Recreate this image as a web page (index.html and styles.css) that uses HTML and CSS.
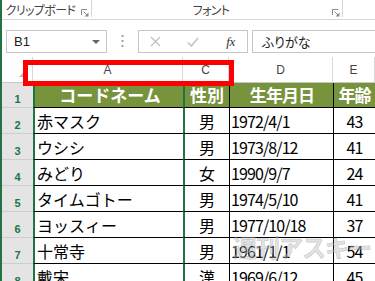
FILE: index.html
```html
<!DOCTYPE html>
<html lang="ja">
  <head>
    <meta charset="UTF-8" />
    <title>ふりがな - Excel</title>
    <link rel="stylesheet" href="styles.css">
  </head>
  <body>
    <div class="app">
      <div class="ribbon">
        <div class="group group-clip">
          <span class="group-label">クリップボード</span>
          <span class="launcher">
            <svg width="8" height="8" viewBox="0 0 8 8"><path d="M0.5 6V0.5H6" fill="none" stroke="#8a8a8a"/><path d="M2.5 2.5L6.5 6.5" stroke="#8a8a8a"/><path d="M3.5 7.5H7.5V3.5Z" fill="#8a8a8a"/></svg>
          </span>
        </div>
        <div class="group group-font">
          <span class="group-label">フォント</span>
          <span class="launcher">
            <svg width="8" height="8" viewBox="0 0 8 8"><path d="M0.5 6V0.5H6" fill="none" stroke="#8a8a8a"/><path d="M2.5 2.5L6.5 6.5" stroke="#8a8a8a"/><path d="M3.5 7.5H7.5V3.5Z" fill="#8a8a8a"/></svg>
          </span>
        </div>
      </div>

      <div class="formula-bar">
        <div class="name-box">
          <span>B1</span>
          <span class="arrow"></span>
        </div>
        <div class="dots">
          <svg width="3" height="13" viewBox="0 0 3 13"><rect x="0.5" y="0" width="2" height="2" fill="#a0a0a0"/><rect x="0.5" y="5" width="2" height="2" fill="#a0a0a0"/><rect x="0.5" y="10" width="2" height="2" fill="#a0a0a0"/></svg>
        </div>
        <div class="fx-buttons">
          <span class="fx-cancel">
            <svg width="11" height="11" viewBox="0 0 11 11"><path d="M1 1L10 10M10 1L1 10" stroke="#c0c0c0" stroke-width="1.2"/></svg>
          </span>
          <span class="fx-enter">
            <svg width="12" height="10" viewBox="0 0 12 10"><path d="M1 5.5L4.5 9L11 1" fill="none" stroke="#c0c0c0" stroke-width="1.5"/></svg>
          </span>
          <span class="fx-func">fx</span>
        </div>
        <div class="formula-input">ふりがな</div>
      </div>

      <div class="sheet">
        <div class="row col-head">
          <div class="corner"><span class="corner-mark"></span></div>
          <div>A</div>
          <div>C</div>
          <div>D</div>
          <div>E</div>
        </div>
        <div class="row title-row">
          <div class="rh">1</div>
          <div class="ca">コードネーム</div>
          <div class="cc">性別</div>
          <div class="cd">生年月日</div>
          <div class="ce">年齢</div>
        </div>
        <div class="row">
          <div class="rh">2</div>
          <div class="ca">赤マスク</div>
          <div class="cc">男</div>
          <div class="cd">1972/4/1</div>
          <div class="ce">43</div>
        </div>
        <div class="row">
          <div class="rh">3</div>
          <div class="ca">ウシシ</div>
          <div class="cc">男</div>
          <div class="cd">1973/8/12</div>
          <div class="ce">41</div>
        </div>
        <div class="row">
          <div class="rh">4</div>
          <div class="ca">みどり</div>
          <div class="cc">女</div>
          <div class="cd">1990/9/7</div>
          <div class="ce">24</div>
        </div>
        <div class="row">
          <div class="rh">5</div>
          <div class="ca">タイムゴトー</div>
          <div class="cc">男</div>
          <div class="cd">1974/5/10</div>
          <div class="ce">41</div>
        </div>
        <div class="row">
          <div class="rh">6</div>
          <div class="ca">ヨッスィー</div>
          <div class="cc">男</div>
          <div class="cd">1977/10/18</div>
          <div class="ce">37</div>
        </div>
        <div class="row">
          <div class="rh">7</div>
          <div class="ca">十常寺</div>
          <div class="cc">男</div>
          <div class="cd">1961/1/1</div>
          <div class="ce">54</div>
        </div>
        <div class="row">
          <div class="rh">8</div>
          <div class="ca">戴宋</div>
          <div class="cc">漢</div>
          <div class="cd">1969/6/12</div>
          <div class="ce">45</div>
        </div>
      </div>

      <div class="highlight"></div>
      <div class="watermark">週刊アスキー</div>
    </div>
  </body>
</html>
```

FILE: styles.css
```css
html,
body {
  margin: 0;
  padding: 0;
}
body {
  width: 375px;
  height: 281px;
  overflow: hidden;
  background: #fff;
  font-family: "Noto Sans CJK JP", sans-serif;
}
.app {
  position: relative;
  height: 281px;
  border-left: 2px solid #217346;
  overflow: hidden;
}

/* ribbon */
.ribbon {
  display: flex;
  align-items: flex-start;
  height: 19px;
  border-bottom: 1px solid #d6d6d6;
}
.group {
  display: flex;
  height: 17px;
  border-right: 1px solid #d6d6d6;
}
.group-clip {
  width: 89px;
}
.group-font {
  width: 250px;
}
.group-label {
  flex: 1;
  text-align: center;
  font-size: 12px;
  line-height: 20px;
  color: #444;
  font-feature-settings: "palt";
  letter-spacing: -0.6px;
  white-space: nowrap;
}
.launcher {
  width: 12px;
  padding-top: 9px;
  padding-left: 2px;
  box-sizing: border-box;
}
.launcher svg {
  display: block;
}

/* formula bar */
.formula-bar {
  display: flex;
  height: 23px;
  padding: 10px 0 4px 4px;
}
.name-box {
  display: flex;
  align-items: center;
  justify-content: space-between;
  width: 101px;
  box-sizing: border-box;
  border: 1px solid #c6c6c6;
  padding: 0 6px 0 7px;
  font-family: "Liberation Sans", sans-serif;
  font-size: 13px;
  color: #222;
}
.arrow {
  width: 0;
  height: 0;
  border-left: 4px solid transparent;
  border-right: 4px solid transparent;
  border-top: 4px solid #666;
}
.dots {
  width: 31px;
  display: flex;
  align-items: center;
  justify-content: center;
}
.dots svg {
  display: block;
}
.fx-buttons {
  display: flex;
  width: 110px;
  box-sizing: border-box;
  border: 1px solid #c6c6c6;
}
.fx-buttons span {
  display: flex;
  align-items: center;
  justify-content: center;
}
.fx-cancel {
  width: 33px;
}
.fx-enter {
  width: 42px;
}
.fx-func {
  flex: 1;
  font-family: "Liberation Serif", serif;
  font-style: italic;
  font-size: 13px;
  color: #333;
  letter-spacing: -0.5px;
}
.formula-input {
  flex: 1;
  margin-left: 4px;
  border: 1px solid #c6c6c6;
  border-right: none;
  padding-left: 9px;
  font-size: 13px;
  line-height: 21px;
  color: #222;
  font-feature-settings: "palt";
}

/* sheet */
.row {
  display: grid;
  grid-template-columns: 31px 150px 46px 104px 1fr;
  height: 26px;
}
.row > div {
  box-sizing: border-box;
  border-bottom: 1px solid #000;
  white-space: nowrap;
  overflow: hidden;
}
.col-head {
  height: 26px;
}
.col-head > div {
  border-bottom: 1px solid #c8c8c8;
  border-right: 1px solid #d8d8d8;
  text-align: center;
  font-family: "Liberation Sans", sans-serif;
  font-size: 12px;
  line-height: 27px;
  color: #444;
}
.corner {
  position: relative;
}
.corner-mark {
  position: absolute;
  right: 6px;
  bottom: 5px;
  width: 0;
  height: 0;
  border-left: 7px solid transparent;
  border-bottom: 7px solid #b5b5b5;
}
.title-row {
  height: 25px;
}
.title-row > div:not(.rh) {
  background: #77933c;
  color: #fff;
  font-weight: bold;
  font-size: 17px;
  line-height: 23px;
  text-align: center;
}
.row > .rh {
  background: #e4e4e4;
  border-bottom: 1px solid #cdcdcd;
  text-align: center;
  font-family: "Liberation Sans", sans-serif;
  font-weight: bold;
  font-size: 11px;
  color: #217346;
  display: flex;
  align-items: flex-end;
  justify-content: center;
  padding-bottom: 2px;
}
.ca {
  border-left: 2px solid #217346;
  padding-left: 2px;
  font-size: 16px;
  line-height: 27px;
}
.cc {
  border-left: 2px solid #217346;
  text-align: center;
  font-size: 16px;
  line-height: 27px;
}
.cd {
  border-left: 1px solid #000;
  padding-left: 1px;
  font-size: 16px;
  line-height: 27px;
  letter-spacing: -0.9px;
}
.ce {
  border-left: 1px solid #000;
  text-align: center;
  font-size: 16px;
  line-height: 27px;
  letter-spacing: -0.9px;
}

/* overlays */
.highlight {
  position: absolute;
  left: 21px;
  top: 60px;
  width: 211px;
  height: 26px;
  box-sizing: border-box;
  border: 5px solid #ff0000;
}
.watermark {
  position: absolute;
  left: 231px;
  top: 229px;
  font-size: 24px;
  font-weight: bold;
  letter-spacing: -1px;
  color: rgba(190, 190, 190, 0.45);
  -webkit-text-stroke: 0.6px rgba(120, 120, 120, 0.35);
  white-space: nowrap;
}
```
